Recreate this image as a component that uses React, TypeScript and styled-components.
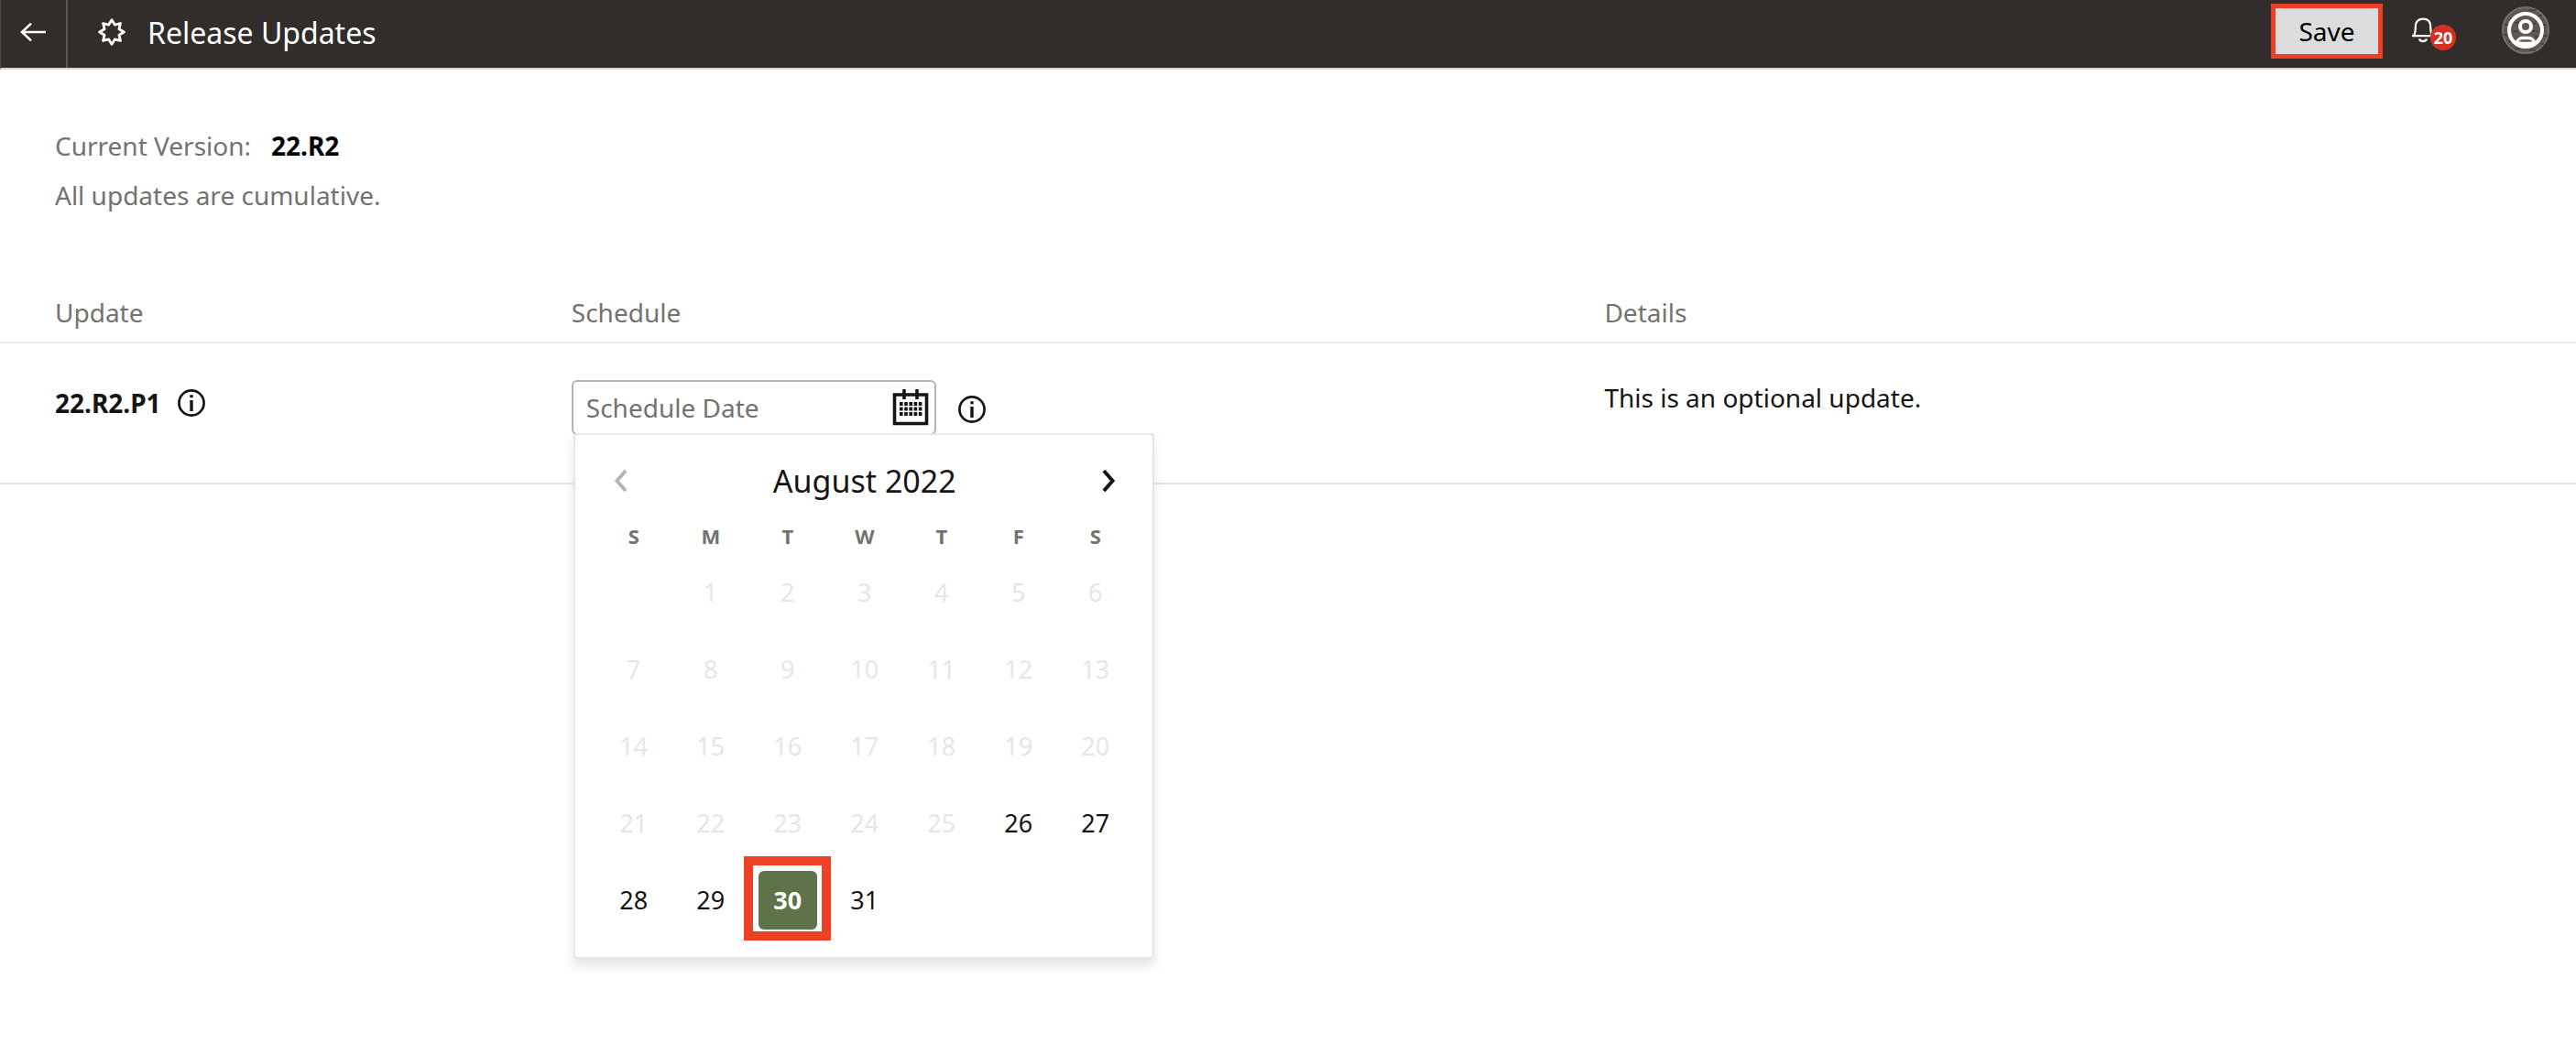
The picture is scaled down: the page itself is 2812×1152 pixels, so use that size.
import React from "react";
import styled, { createGlobalStyle, css } from "styled-components";

const GlobalStyle = createGlobalStyle`
  *, *::before, *::after { box-sizing: border-box; }
  body {
    margin: 0;
    background: #ffffff;
    color: #161513;
    font-family: "Noto Sans", "Open Sans", sans-serif;
    font-size: 28px;
    line-height: 38px;
  }
  button, input { font: inherit; color: inherit; }
  svg { display: block; flex: none; }
`;

const bareButton = css`
  display: flex;
  align-items: center;
  justify-content: center;
  padding: 0;
  border: 0;
  background: transparent;
  cursor: pointer;
`;

const Page = styled.div`
  display: flex;
  flex-direction: column;
  min-height: 100vh;
`;

const TopBar = styled.header`
  display: flex;
  align-items: center;
  height: 76px;
  background: #312d2a;
  border-bottom: 2px solid #d9d9d9;
  border-left: 1px solid #4a4643;
  color: #ffffff;
`;

const BackButton = styled.button`
  ${bareButton}
  align-self: stretch;
  width: 73px;
  padding: 0 2px 4px 0;
  border-right: 2px solid #5b5754;
`;

const TitleGroup = styled.div`
  display: flex;
  align-items: center;
  gap: 24px;
  flex: 1;
  padding: 0 0 4px 33px;
`;

const Title = styled.h1`
  margin: 0;
  padding-top: 2px;
  font-size: 32px;
  font-weight: 400;
  line-height: 44px;
`;

const Actions = styled.div`
  display: flex;
  align-items: center;
  gap: 32px;
  padding: 0 29px 8px 0;
`;

const SaveButton = styled.button`
  ${bareButton}
  width: 122px;
  height: 60px;
  margin-top: 2px;
  border: 5px solid #ee4025;
  background: #dcdcdc;
  color: #000000;
`;

const AlertsButton = styled.button`
  ${bareButton}
  position: relative;
  justify-content: flex-start;
  width: 48px;
  height: 44px;
`;

const Badge = styled.span`
  position: absolute;
  right: 0;
  bottom: 0;
  width: 28px;
  height: 28px;
  border-radius: 50%;
  background: #d63024;
  font-size: 18px;
  font-weight: 700;
  line-height: 28px;
  text-align: center;
`;

const AvatarButton = styled.button`
  ${bareButton}
  margin-left: 18px;
`;

const Summary = styled.section`
  display: flex;
  flex-direction: column;
  gap: 16px;
  padding: 64px 60px 0;
  color: #74726f;

  p { margin: 0; }
`;

const Version = styled.strong`
  margin-left: 22px;
  color: #000000;
`;

const UpdatesTable = styled.table`
  width: 100%;
  margin-top: 82px;
  border-collapse: collapse;
  table-layout: fixed;
`;

const HeadCell = styled.th<{ $width?: string }>`
  width: ${(p) => p.$width ?? "auto"};
  padding: 8px 0 13px 60px;
  border-bottom: 2px solid #e6e6e6;
  color: #74726f;
  font-weight: 400;
  text-align: left;
`;

const Cell = styled.td`
  height: 154px;
  padding: 40px 0 0 60px;
  border-bottom: 2px solid #e6e6e6;
  vertical-align: top;
`;

const NameLine = styled.div`
  display: flex;
  align-items: center;
  gap: 18px;
  padding-top: 6px;
  font-weight: 700;
`;

const InfoButton = styled.button`
  ${bareButton}
`;

const DateLine = styled.div`
  position: relative;
  display: flex;
  align-items: center;
  gap: 24px;

  > ${InfoButton} { padding-top: 4px; }
`;

const DateField = styled.div`
  display: flex;
  align-items: center;
  width: 398px;
  height: 60px;
  padding: 0 6px 0 14px;
  border: 2px solid #b4b4b3;
  border-radius: 6px;
`;

const DateInput = styled.input`
  flex: 1;
  min-width: 0;
  padding: 0;
  border: 0;
  outline: 0;
  background: transparent;

  &::placeholder { color: #74726f; opacity: 1; }
`;

const IconButton = styled.button`
  ${bareButton}
`;

const Popup = styled.div`
  position: absolute;
  top: 58px;
  left: 2px;
  z-index: 1;
  width: 634px;
  padding: 20px 20px 20px 22px;
  border: 2px solid #e6e6e6;
  border-radius: 4px;
  background: #ffffff;
  box-shadow: 0 8px 12px rgba(0, 0, 0, 0.1);
`;

const MonthBar = styled.div`
  display: flex;
  align-items: center;
  justify-content: space-between;
  height: 60px;
  margin-bottom: 10px;
  padding: 0 20px;
  font-size: 34px;
`;

const Days = styled.table`
  width: 100%;
  border-collapse: collapse;
  table-layout: fixed;
`;

const Weekday = styled.th`
  height: 40px;
  padding: 0;
  color: #74726f;
  font-size: 22px;
  font-weight: 700;
  line-height: 38px;
`;

const DayCell = styled.td`
  height: 84px;
  padding: 0;
`;

const Day = styled.button<{ $selected?: boolean }>`
  ${bareButton}
  width: 64px;
  height: 64px;
  margin: 0 auto;
  border-radius: 6px;
  font-size: 27px;

  &:disabled { color: #e6e6e6; cursor: default; }

  ${(p) =>
    p.$selected &&
    css`
      position: relative;
      background: #5f734a;
      color: #ffffff;
      font-weight: 700;

      &::after {
        content: "";
        position: absolute;
        inset: -16px -15px -12px -16px;
        border: 10px solid #ee4025;
      }
    `}
`;

const BackIcon = () => (
  <svg width="30" height="24" viewBox="0 0 30 24" fill="none" stroke="#fff" strokeWidth="2.6">
    <path d="M29 12H3M13 2.600L3 12l10 9.400" />
  </svg>
);

const starPoints = (() => {
  const points: string[] = [];
  for (let i = 0; i < 16; i++) {
    const radius = i % 2 === 0 ? 13.4 : 8.6;
    const angle = (i * Math.PI) / 8;
    points.push(
      `${(15 + radius * Math.sin(angle)).toFixed(2)},${(15 - radius * Math.cos(angle)).toFixed(2)}`
    );
  }
  return points.join(" ");
})();

const StarIcon = () => (
  <svg width="30" height="30" viewBox="0 0 30 30" fill="none" stroke="#fff" strokeWidth="2.8" strokeLinejoin="round">
    <polygon points={starPoints} />
  </svg>
);

const BellIcon = () => (
  <svg width="24" height="28" viewBox="0 0 24 28" fill="none" stroke="#fff" strokeWidth="2.2">
    <path d="M0 20.200h24M2 20c1.400-2.600 1.800-5 1.800-10C3.800 4.500 7 1.600 12 1.600s8.200 2.900 8.200 8.400c0 5 .4 7.400 1.800 10" />
    <path d="M8 23.500c1 3.400 7 3.400 8 0" strokeWidth="2.600" />
  </svg>
);

const AvatarIcon = () => (
  <svg width="52" height="52" viewBox="0 0 52 52" fill="none">
    <circle cx="26" cy="26" r="25" fill="#5f5852" stroke="#6f7072" strokeWidth="2" />
    <path
      d="M9 13h6M30 4h8M40 10h4M3 20h5M44 20h5M14 18h5M33 19h4M2 31h5M13 27h5M34 27h5M45 32h5M7 38h4M36 33h4M42 41h4M14 46h6M30 48h7"
      stroke="#312d2a"
      strokeWidth="1"
    />
    <circle cx="26" cy="26" r="18" stroke="#fff" strokeWidth="4" />
    <circle cx="26" cy="22" r="6" stroke="#fff" strokeWidth="4" />
    <path
      d="M16.500 39c1-3 4-4.500 6-4.500h7c2 0 5 1.500 6 4.500c-3 2-16 2-19 0z"
      stroke="#fff"
      strokeWidth="3.500"
      strokeLinejoin="round"
    />
  </svg>
);

const InfoIcon = () => (
  <svg width="30" height="30" viewBox="0 0 30 30" fill="none">
    <circle cx="15" cy="15" r="13.600" stroke="#161513" strokeWidth="2.700" />
    <path d="M15 12v12M15 6.200v3" stroke="#161513" strokeWidth="3.4" />
  </svg>
);

const CalendarIcon = () => (
  <svg width="40" height="40" viewBox="0 0 40 40" fill="none" stroke="#161513">
    <path d="M2.500 6h35v31.500h-35z" strokeWidth="3.6" />
    <path d="M13 0v11M27 0v11" strokeWidth="3.6" />
    <path
      d="M8 16h24.400M8 21.500h24.400M8 27h24.400"
      strokeWidth="3.8"
      strokeDasharray="3.6 1.600"
    />
  </svg>
);

const Chevron = ({ next }: { next?: boolean }) => (
  <svg width="16" height="26" viewBox="0 0 16 26" fill="none" stroke={next ? "#161513" : "#b4b4b3"} strokeWidth="4">
    <path d={next ? "M3 2l9.500 11L3 24" : "M13 2L3.500 13 13 24"} />
  </svg>
);

const WEEKDAYS = ["S", "M", "T", "W", "T", "F", "S"];
const FIRST_OPEN_DAY = 26;
const SELECTED_DAY = 30;

// August 2022 starts on a Monday, so the first column of week one is empty.
const WEEKS = Array.from({ length: 5 }, (_, week) =>
  Array.from({ length: 7 }, (_, column) => week * 7 + column)
);

const Calendar = () => (
  <Popup role="dialog" aria-label="Choose a date">
    <MonthBar>
      <IconButton type="button" aria-label="Previous month" disabled>
        <Chevron />
      </IconButton>
      <span>August 2022</span>
      <IconButton type="button" aria-label="Next month">
        <Chevron next />
      </IconButton>
    </MonthBar>
    <Days>
      <thead>
        <tr>
          {WEEKDAYS.map((name, i) => (
            <Weekday key={i} scope="col">{name}</Weekday>
          ))}
        </tr>
      </thead>
      <tbody>
        {WEEKS.map((week, i) => (
          <tr key={i}>
            {week.map((day) => (
              <DayCell key={day}>
                {day >= 1 && day <= 31 && (
                  <Day type="button" disabled={day < FIRST_OPEN_DAY} $selected={day === SELECTED_DAY}>
                    {day}
                  </Day>
                )}
              </DayCell>
            ))}
          </tr>
        ))}
      </tbody>
    </Days>
  </Popup>
);

export default function App() {
  return (
    <Page>
      <GlobalStyle />
      <TopBar>
        <BackButton type="button" aria-label="Back">
          <BackIcon />
        </BackButton>
        <TitleGroup>
          <StarIcon />
          <Title>Release Updates</Title>
        </TitleGroup>
        <Actions>
          <SaveButton type="button">Save</SaveButton>
          <AlertsButton type="button" aria-label="Notifications">
            <BellIcon />
            <Badge>20</Badge>
          </AlertsButton>
          <AvatarButton type="button" aria-label="Account">
            <AvatarIcon />
          </AvatarButton>
        </Actions>
      </TopBar>
      <main>
        <Summary>
          <p>
            Current Version:<Version>22.R2</Version>
          </p>
          <p>All updates are cumulative.</p>
        </Summary>
        <UpdatesTable>
          <thead>
            <tr>
              <HeadCell scope="col" $width="20.05%">Update</HeadCell>
              <HeadCell scope="col" $width="40.1%">Schedule</HeadCell>
              <HeadCell scope="col">Details</HeadCell>
            </tr>
          </thead>
          <tbody>
            <tr>
              <Cell>
                <NameLine>
                  22.R2.P1
                  <InfoButton type="button" aria-label="About this update">
                    <InfoIcon />
                  </InfoButton>
                </NameLine>
              </Cell>
              <Cell>
                <DateLine>
                  <DateField>
                    <DateInput type="text" aria-label="Schedule Date" placeholder="Schedule Date" />
                    <IconButton type="button" aria-label="Open calendar">
                      <CalendarIcon />
                    </IconButton>
                  </DateField>
                  <InfoButton type="button" aria-label="About scheduling">
                    <InfoIcon />
                  </InfoButton>
                  <Calendar />
                </DateLine>
              </Cell>
              <Cell>This is an optional update.</Cell>
            </tr>
          </tbody>
        </UpdatesTable>
      </main>
    </Page>
  );
}
